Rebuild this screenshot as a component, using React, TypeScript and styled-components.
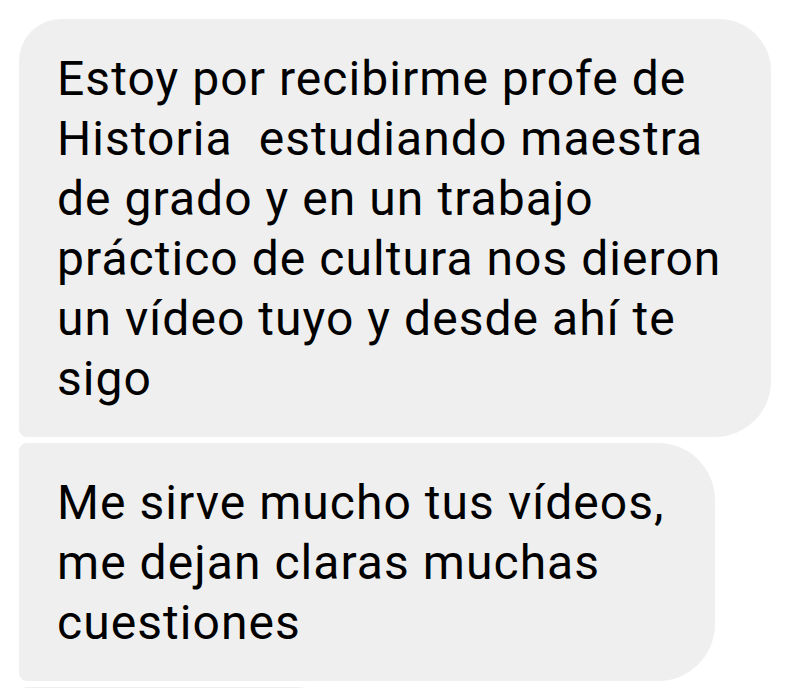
import React from "react";
import styled, { createGlobalStyle } from "styled-components";

const Global = createGlobalStyle`
  html, body { margin: 0; padding: 0; background: #ffffff; }
  body { overflow: hidden; }
`;

const Thread = styled.div`
  display: flex;
  flex-direction: column;
  align-items: flex-start;
  gap: 6px;
  padding: 19px 0 0 19px;
  height: 688px;
  box-sizing: border-box;
  overflow: hidden;
`;

type Pos = "first" | "middle" | "last";

const Bubble = styled.div<{ $pos: Pos; $w?: number }>`
  background: #efefef;
  color: #000000;
  font-family: Roboto, "Liberation Sans", sans-serif;
  font-size: 48px;
  line-height: 60px;
  letter-spacing: 1.05px;
  white-space: pre-wrap;
  padding: 30px 50px 28px 38px;
  flex-shrink: 0;
  border-radius: ${({ $pos }) =>
    $pos === "first" ? "42px 52px 56px 8px" : $pos === "middle" ? "8px 57px 57px 8px" : "8px 57px 57px 42px"};
  ${({ $w }) => ($w ? `width: ${$w}px; box-sizing: border-box;` : "")}
`;

export default function App() {
  return (
    <>
      <Global />
      <Thread>
        <Bubble $pos="first">
          {"Estoy por recibirme profe de\nHistoria  estudiando maestra\nde grado y en un trabajo\npráctico de cultura nos dieron\nun vídeo tuyo y desde ahí te\nsigo"}
        </Bubble>
        <Bubble $pos="middle">
          {"Me sirve mucho tus vídeos,\nme dejan claras muchas\ncuestiones"}
        </Bubble>
        <Bubble $pos="last" $w={333}>
          {"\u00a0"}
        </Bubble>
      </Thread>
    </>
  );
}
